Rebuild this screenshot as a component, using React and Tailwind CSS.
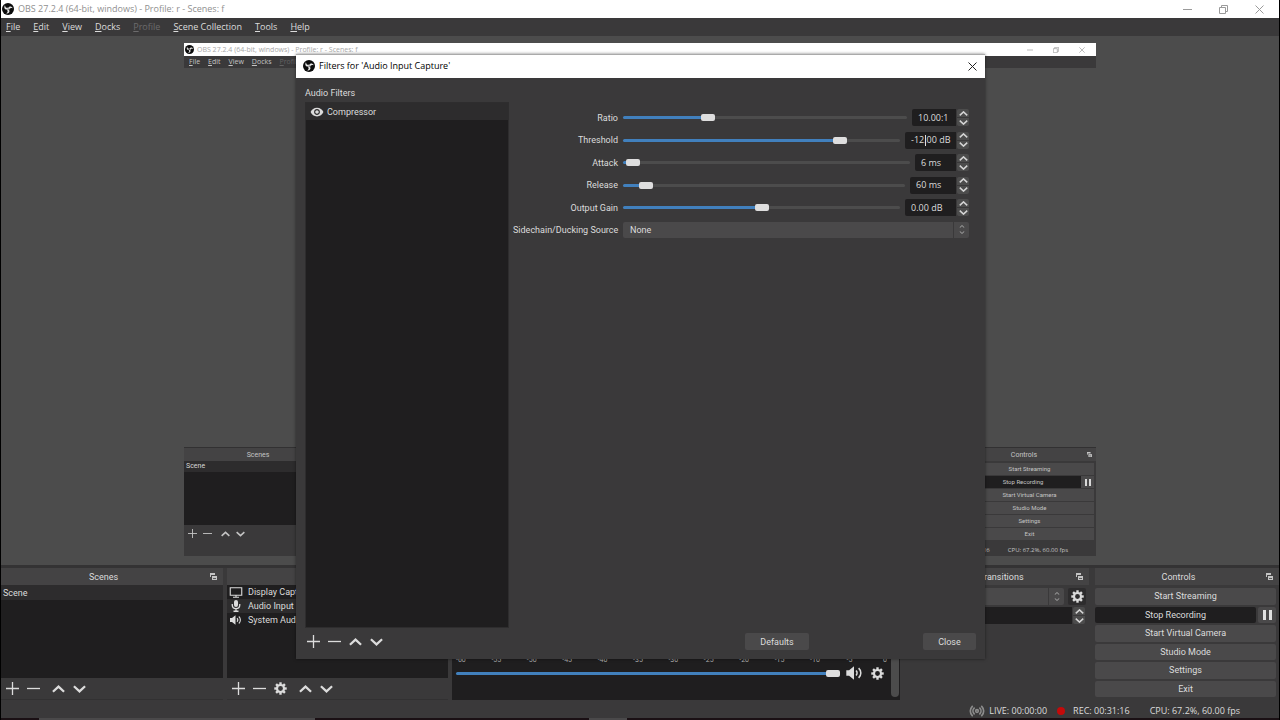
import { useState } from "react";
import clsx from "clsx";
import { MdVisibility } from "react-icons/md";
import { Radio } from "lucide-react";

const menuItems = ["File", "Edit", "View", "Docks", "Profile", "Scene Collection", "Tools", "Help"];

const controlLabels = [
  "Start Streaming",
  "Stop Recording",
  "Start Virtual Camera",
  "Studio Mode",
  "Settings",
  "Exit",
];

const meterTicks = [-60, -55, -50, -45, -40, -35, -30, -25, -20, -15, -10, -5, 0];

const compressorSettings = [
  { id: "ratio", label: "Ratio", min: 1, max: 32, value: 10, text: "10.00:1", width: "w-[44px]" },
  { id: "threshold", label: "Threshold", min: -60, max: 0, value: -12, text: "-12.00 dB", width: "w-[51px]", caret: true },
  { id: "attack", label: "Attack", min: 1, max: 500, value: 6, text: "6 ms", width: "w-[41px]" },
  { id: "release", label: "Release", min: 1, max: 1000, value: 60, text: "60 ms", width: "w-[46px]" },
  { id: "gain", label: "Output Gain", min: -32, max: 32, value: 0, text: "0.00 dB", width: "w-[51px]" },
];

function ObsLogo({ className }) {
  return (
    <svg viewBox="0 0 24 24" className={className} aria-hidden="true">
      <circle cx="12" cy="12" r="12" fill="#0c0c0c" />
      {[-30, 90, 210].map((angle) => (
        <path
          key={angle}
          transform={`rotate(${angle} 12 12)`}
          d="M10.6 2.4C6.2 4.4 5.6 9.4 8.8 11.2C10.6 12.2 12.8 11.4 13.6 9.4C10.6 9.8 8.6 6.4 10.6 2.4Z"
          fill="#e8e8e8"
        />
      ))}
    </svg>
  );
}

function Gear({ className }) {
  return (
    <svg viewBox="0 0 24 24" className={className} fill="none" stroke="currentColor" aria-hidden="true">
      <circle cx="12" cy="12" r="6.5" strokeWidth="4" />
      {[0, 45, 90, 135, 180, 225, 270, 315].map((angle) => (
        <path key={angle} d="M12 0.5V5" strokeWidth="4.4" transform={`rotate(${angle} 12 12)`} />
      ))}
    </svg>
  );
}

function Speaker({ className }) {
  return (
    <svg viewBox="0 0 24 20" className={className} fill="none" stroke="currentColor" aria-hidden="true">
      <path d="M1 6H5L12 0.5V19.5L5 14H1Z" fill="currentColor" stroke="none" />
      <path d="M15 6.5C16.8 8.4 16.8 11.6 15 13.5M18.6 3C22.8 6.6 22.8 13.4 18.6 17" strokeWidth="2.2" />
    </svg>
  );
}

function Microphone({ className }) {
  return (
    <svg viewBox="0 0 20 24" className={className} fill="none" stroke="currentColor" aria-hidden="true">
      <rect x="6" y="0" width="8" height="14" rx="4" fill="currentColor" stroke="none" />
      <path d="M2.5 8V10C2.5 19.6 17.5 19.6 17.5 10V8M10 17V22.5M5 22.5H15" strokeWidth="2.6" />
    </svg>
  );
}

function Monitor({ className }) {
  return (
    <svg viewBox="0 0 26 22" className={className} fill="none" stroke="currentColor" aria-hidden="true">
      <path d="M1.5 1.5H24.5V16.5H1.5ZM13 16.5V20M7 20.5H19" strokeWidth="2.2" />
    </svg>
  );
}

function Chevron({ up, className }) {
  return (
    <svg viewBox="0 0 14 8" className={className} fill="none" stroke="currentColor" strokeWidth="2.4" aria-hidden="true">
      <path d={up ? "M1 7L7 1.4L13 7" : "M1 1L7 6.6L13 1"} />
    </svg>
  );
}

function Plus({ className }) {
  return (
    <svg viewBox="0 0 13 13" className={className} stroke="currentColor" strokeWidth="1.3" aria-hidden="true">
      <path d="M6.5 0V13M0 6.5H13" />
    </svg>
  );
}

function Minus({ className }) {
  return (
    <svg viewBox="0 0 13 13" className={className} stroke="currentColor" strokeWidth="1.3" aria-hidden="true">
      <path d="M0 6.5H13" />
    </svg>
  );
}

function FloatIcon({ className }) {
  return (
    <svg viewBox="0 0 7 7" className={className} aria-hidden="true">
      <path d="M0 0H5V2H1V4H0Z" fill="#c4c4c4" />
      <path d="M2 3H7V7H2Z" fill="#c4c4c4" />
      <path d="M3 5H6V6H3Z" fill="#5a5a5a" />
    </svg>
  );
}

function WindowButtons({ small }) {
  const size = small ? "size-[6px]" : "size-[9px]";
  return (
    <div className={clsx("ml-auto flex items-center text-[#9a9a9a]", small ? "gap-5 pr-[11px]" : "gap-[27px] pr-[15px]")}>
      <button aria-label="Minimize">
        <svg viewBox="0 0 9 9" className={size} stroke="currentColor" fill="none">
          <path d="M0 4.5H9" />
        </svg>
      </button>
      <button aria-label="Restore">
        <svg viewBox="0 0 9 9" className={size} stroke="currentColor" fill="none">
          <path d="M0.5 2.5H6.5V8.5H0.5ZM2.5 2.5V0.5H8.5V6.5H6.5" />
        </svg>
      </button>
      <button aria-label="Close window">
        <svg viewBox="0 0 9 9" className={size} stroke="currentColor" fill="none">
          <path d="M0.5 0.5L8.5 8.5M8.5 0.5L0.5 8.5" />
        </svg>
      </button>
    </div>
  );
}

function DockTitle({ children }) {
  return (
    <div className="flex h-[17px] shrink-0 items-center bg-[#444344] pr-[6px]">
      <h2 className="flex-1 pr-1 text-center">{children}</h2>
      <button aria-label={`Float ${children}`}>
        <FloatIcon className="size-[7px]" />
      </button>
    </div>
  );
}

function ListToolbar({ withGear, spaced, className }) {
  return (
    <div className={clsx("flex shrink-0 items-center gap-2", className)}>
      <button aria-label="Add">
        <Plus className="size-[13px]" />
      </button>
      <button aria-label="Remove">
        <Minus className="size-[13px]" />
      </button>
      {withGear && (
        <button aria-label="Properties">
          <Gear className="size-[13px]" />
        </button>
      )}
      <button aria-label="Move up" className={clsx(spaced && "ml-1")}>
        <Chevron up className="h-2 w-[13px]" />
      </button>
      <button aria-label="Move down">
        <Chevron className="h-2 w-[13px]" />
      </button>
    </div>
  );
}

function SpinButtons() {
  return (
    <div className="ml-px flex w-3 flex-col gap-px self-stretch text-[#d4d4d4]">
      <button aria-label="Increase" className="flex flex-1 items-center justify-center rounded-t-xs bg-[#4c4c4c]">
        <Chevron up className="h-[5px] w-[9px]" />
      </button>
      <button aria-label="Decrease" className="flex flex-1 items-center justify-center rounded-b-xs bg-[#4c4c4c]">
        <Chevron className="h-[5px] w-[9px]" />
      </button>
    </div>
  );
}

function Slider({ id, label, min, max, value, onChange }) {
  const ratio = (value - min) / (max - min);
  const stop = `calc(7px + (100% - 14px) * ${ratio})`;
  return (
    <input
      id={id}
      type="range"
      aria-label={label}
      min={min}
      max={max}
      value={value}
      onChange={(e) => onChange(Number(e.target.value))}
      className="h-[3px] min-w-0 flex-1 appearance-none rounded-full outline-none [&::-webkit-slider-runnable-track]:h-[3px] [&::-webkit-slider-thumb]:-mt-[2px] [&::-webkit-slider-thumb]:h-[7px] [&::-webkit-slider-thumb]:w-[14px] [&::-webkit-slider-thumb]:appearance-none [&::-webkit-slider-thumb]:rounded-[2px] [&::-webkit-slider-thumb]:bg-[#dedede]"
      style={{ backgroundImage: `linear-gradient(to right, #4180bd ${stop}, #4c4c4c ${stop})` }}
    />
  );
}

function SelectArrows() {
  return (
    <span className="pointer-events-none absolute inset-y-0 right-0 flex w-4 flex-col items-center justify-center gap-[3px] border-l border-[#3a393a] text-[#b4b4b4]">
      <Chevron up className="h-[3px] w-[6px]" />
      <Chevron className="h-[3px] w-[6px]" />
    </span>
  );
}

function FilterRow({ setting }) {
  const [value, setValue] = useState(setting.value);
  return (
    <div className="flex h-[17px] items-center">
      <label htmlFor={setting.id} className="mr-[5px] w-[105px] text-right whitespace-nowrap">
        {setting.label}
      </label>
      <Slider {...setting} value={value} onChange={setValue} />
      <div className="relative ml-[5px] flex h-full">
        <input
          type="text"
          aria-label={`${setting.label} value`}
          defaultValue={setting.text}
          className={clsx("rounded-l-xs bg-[#1f1e1f] pl-[6px] font-['Open_Sans',sans-serif] outline-none", setting.width)}
        />
        {setting.caret && <span className="absolute top-[3px] left-[20px] h-[11px] w-px bg-[#e0e0e0]" />}
      </div>
      <SpinButtons />
    </div>
  );
}

function FiltersDialog() {
  return (
    <div
      role="dialog"
      aria-label="Filters for 'Audio Input Capture'"
      className="absolute top-[54px] left-[295px] flex h-[605px] w-[689px] flex-col bg-[#3a393a] shadow-[0_0_3px_rgba(0,0,0,0.5)]"
    >
      <div className="flex h-6 shrink-0 items-center border-t border-[#aaaaaa] bg-white pr-2 pb-px pl-[7px] font-['Open_Sans',sans-serif] text-black">
        <ObsLogo className="size-3" />
        <h1 className="ml-1">Filters for &apos;Audio Input Capture&apos;</h1>
        <button aria-label="Close dialog" className="ml-auto">
          <svg viewBox="0 0 9 9" className="size-[9px]" stroke="#222222" fill="none">
            <path d="M0.5 0.5L8.5 8.5M8.5 0.5L0.5 8.5" />
          </svg>
        </button>
      </div>

      <div className="flex min-h-0 flex-1 pr-4 pl-[9px]">
        <div className="flex w-[204px] flex-col pt-[7px]">
          <h2 className="leading-[17px]">Audio Filters</h2>
          <ul className="flex-1 border border-[#2e2d2e] bg-[#1f1e1f]">
            <li className="flex h-[17px] items-center bg-[#2d2c2d] pl-1">
              <MdVisibility className="size-[14px]" />
              <span className="ml-[3px]">Compressor</span>
            </li>
          </ul>
        </div>
        <div className="flex h-[160px] flex-1 flex-col justify-between pt-[31px] pl-1">
          {compressorSettings.map((setting) => (
            <FilterRow key={setting.id} setting={setting} />
          ))}
          <div className="flex h-4 items-center">
            <label htmlFor="sidechain" className="mr-[5px] w-[105px] text-right whitespace-nowrap">
              Sidechain/Ducking Source
            </label>
            <div className="relative flex flex-1 self-stretch">
              <select id="sidechain" className="flex-1 appearance-none rounded-xs bg-[#4a494a] pl-[7px]">
                <option>None</option>
              </select>
              <SelectArrows />
            </div>
          </div>
        </div>
      </div>

      <div className="flex h-[31px] shrink-0 items-center pr-[9px] pb-1 pl-[11px]">
        <ListToolbar />
        <button className="ml-auto h-[17px] w-16 rounded-xs bg-[#4a494a]">Defaults</button>
        <button className="ml-[114px] h-[17px] w-[53px] rounded-xs bg-[#4a494a]">Close</button>
      </div>
    </div>
  );
}

function PreviewWindow() {
  return (
    <div className="flex aspect-video h-full flex-col bg-[#4c4c4c] text-[6px] leading-[10px] text-[#c4c4c4]">
      <div className="flex h-[13px] shrink-0 items-center bg-white pl-px font-['Open_Sans',sans-serif] text-[7px] text-[#a8a8a8]">
        <ObsLogo className="size-[9px]" />
        <span className="ml-[3px]">OBS 27.2.4 (64-bit, windows) - Profile: r - Scenes: f</span>
        <WindowButtons small />
      </div>
      <div className="flex h-3 shrink-0 items-center gap-2 bg-[#3a393a] pl-[5px] font-['Open_Sans',sans-serif] text-[7px]">
        {menuItems.slice(0, 5).map((item) => (
          <span key={item} className={item === "Profile" ? "text-[#636263]" : ""}>
            <u>{item[0]}</u>
            {item.slice(1)}
          </span>
        ))}
      </div>
      <div className="flex-1" />
      <div className="flex h-[95px] shrink-0 justify-between border-t border-[#323132] bg-[#3a393a]">
        <div className="flex w-[158px] flex-col">
          <div className="h-[13px] bg-[#444344] pr-[10px] text-center text-[7px] leading-[14px]">Scenes</div>
          <div className="flex-1 bg-[#1f1e1f]">
            <div className="h-[11px] bg-[#2d2c2d] pl-0.5 text-[7px] leading-[11px] text-[#d8d8d8]">Scene</div>
          </div>
          <div className="flex h-[17px] items-center gap-[6px] pl-1">
            <Plus className="size-[9px]" />
            <Minus className="size-[9px]" />
            <Chevron up className="ml-[3px] h-[6px] w-[9px]" />
            <Chevron className="h-[6px] w-[9px]" />
          </div>
        </div>
        <div className="flex w-[131px] flex-col">
          <div className="flex h-[13px] items-center bg-[#444344] pr-1 text-[7px]">
            <span className="flex-1 pr-1 text-center">Controls</span>
            <FloatIcon className="size-[5px]" />
          </div>
          <div className="grid flex-1 auto-rows-fr gap-px pt-0.5 pr-0.5 pb-0.5 text-center">
            {controlLabels.map((label) =>
              label === "Stop Recording" ? (
                <div key={label} className="flex">
                  <span className="flex flex-1 items-center justify-center bg-[#1f1e1f]">{label}</span>
                  <span className="flex w-[13px] items-center justify-center gap-0.5 bg-[#4a494a]">
                    <i className="h-[7px] w-0.5 bg-[#d8d8d8]" />
                    <i className="h-[7px] w-0.5 bg-[#d8d8d8]" />
                  </span>
                </div>
              ) : (
                <span key={label} className="flex items-center justify-center bg-[#4a494a]">
                  {label}
                </span>
              )
            )}
          </div>
        </div>
      </div>
      <div className="flex h-[14px] shrink-0 items-center justify-end gap-[18px] bg-[#3a393a] pt-0.5 pr-7 font-['Open_Sans',sans-serif]">
        <span>REC: 00:31:16</span>
        <span>CPU: 67.2%, 60.00 fps</span>
      </div>
    </div>
  );
}

function ScenesDock() {
  return (
    <section className="flex min-h-0 flex-col">
      <DockTitle>Scenes</DockTitle>
      <ul className="flex-1 bg-[#1f1e1f]">
        <li className="h-[15px] bg-[#2d2c2d] pl-0.5 leading-4">Scene</li>
      </ul>
      <ListToolbar spaced className="h-[22px] border-b border-[#323132] pl-[5px]" />
    </section>
  );
}

function SourcesDock() {
  return (
    <section className="flex min-h-0 flex-col">
      <DockTitle>Sources</DockTitle>
      <ul className="flex-1 bg-[#1f1e1f]">
        <li className="flex h-[14px] items-center">
          <Monitor className="ml-0.5 h-[11px] w-[14px]" />
          <span className="ml-[5px]">Display Capture</span>
        </li>
        <li className="flex h-[14px] items-center bg-[#2d2c2d]">
          <Microphone className="ml-1 h-3 w-[10px]" />
          <span className="ml-[7px]">Audio Input Capture</span>
        </li>
        <li className="flex h-[14px] items-center">
          <Speaker className="ml-0.5 h-[10px] w-[13px]" />
          <span className="ml-[6px]">System Audio</span>
        </li>
      </ul>
      <ListToolbar withGear spaced className="h-[22px] border-b border-[#323132] pl-[5px]" />
    </section>
  );
}

function MixerDock() {
  const [volume, setVolume] = useState(100);
  return (
    <section className="flex min-h-0 flex-col">
      <DockTitle>Audio Mixer</DockTitle>
      <div className="flex flex-1 items-end bg-[#1f1e1f] pl-1">
        <div className="flex-1 pb-5">
          <div className="-mr-1 flex justify-between text-[7px] leading-[8px] text-[#b0b0b0]">
            {meterTicks.map((tick) => (
              <span key={tick} className="w-2 text-center">
                {tick}
              </span>
            ))}
          </div>
          <div className="mt-0.5 flex h-[14px] items-center">
            <Slider id="volume" label="Volume" min={0} max={100} value={volume} onChange={setVolume} />
            <button aria-label="Mute" className="ml-[5px]">
              <Speaker className="h-[14px] w-[18px]" />
            </button>
            <button aria-label="Mixer settings" className="mr-px ml-2">
              <Gear className="size-[13px]" />
            </button>
          </div>
        </div>
        <div className="mr-px mb-[3px] ml-[6px] w-2 self-stretch rounded-full bg-[#4c4c4c]" />
      </div>
    </section>
  );
}

function TransitionsDock() {
  return (
    <section className="flex min-h-0 flex-col pr-0.5">
      <DockTitle>Scene Transitions</DockTitle>
      <div className="mt-[3px] flex h-[17px] items-center">
        <div className="relative flex flex-1 self-stretch">
          <select aria-label="Transition" className="min-w-0 flex-1 appearance-none rounded-xs bg-[#4a494a] pl-2">
            <option>Fade</option>
          </select>
          <SelectArrows />
        </div>
        <button
          aria-label="Transition properties"
          className="mr-[3px] ml-1 flex w-[18px] items-center justify-center self-stretch rounded-xs bg-[#2d2c2d]"
        >
          <Gear className="size-[13px]" />
        </button>
      </div>
      <div className="mt-0.5 mr-1 flex h-[17px] items-center">
        <input
          type="text"
          aria-label="Duration"
          defaultValue="300 ms"
          className="h-full min-w-0 flex-1 bg-[#1f1e1f] pl-2"
        />
        <SpinButtons />
      </div>
    </section>
  );
}

function ControlsDock() {
  return (
    <section className="flex min-h-0 flex-col">
      <DockTitle>Controls</DockTitle>
      <div className="grid flex-1 auto-rows-fr gap-[2px] pt-[3px] pr-[3px] pb-[3px]">
        {controlLabels.map((label) =>
          label === "Stop Recording" ? (
            <div key={label} className="flex gap-[2px]">
              <button className="flex-1 rounded-xs bg-[#1f1e1f]">{label}</button>
              <button aria-label="Pause recording" className="flex w-[18px] items-center justify-center gap-[3px] rounded-xs bg-[#4a494a]">
                <i className="h-[10px] w-[3px] bg-[#e0e0e0]" />
                <i className="h-[10px] w-[3px] bg-[#e0e0e0]" />
              </button>
            </div>
          ) : (
            <button key={label} className="rounded-xs bg-[#4a494a]">
              {label}
            </button>
          )
        )}
      </div>
    </section>
  );
}

export default function App() {
  return (
    <div className="relative flex h-screen flex-col overflow-hidden border-x border-black bg-[#3a393a] font-[Roboto,sans-serif] text-[9px] leading-[14px] text-[#dcdcdc]">
      <header className="flex h-[18px] shrink-0 items-center bg-white pl-px font-['Open_Sans',sans-serif] text-[#8f8f8f]">
        <ObsLogo className="size-3" />
        <span className="ml-1">OBS 27.2.4 (64-bit, windows) - Profile: r - Scenes: f</span>
        <WindowButtons />
      </header>

      <nav className="flex h-[18px] shrink-0 items-center gap-[13px] pl-[5px] font-['Open_Sans',sans-serif]">
        {menuItems.map((item) => (
          <button key={item} disabled={item === "Profile"} className="disabled:text-[#6c6b6c]">
            <u>{item[0]}</u>
            {item.slice(1)}
          </button>
        ))}
      </nav>

      <main className="flex min-h-0 flex-1 justify-center bg-[#4c4c4c] pt-[7px] pb-[9px]">
        <PreviewWindow />
      </main>

      <div className="grid h-[135px] shrink-0 grid-cols-[222fr_221fr_448fr_187fr_184fr] gap-1 border-t-[3px] border-[#343334]">
        <ScenesDock />
        <SourcesDock />
        <MixerDock />
        <TransitionsDock />
        <ControlsDock />
      </div>

      <footer className="flex h-[18px] shrink-0 items-center justify-end pt-1 pr-[39px] font-['Open_Sans',sans-serif]">
        <Radio className="size-4 text-[#8c8c8c]" strokeWidth={2.5} />
        <span className="ml-1">LIVE: 00:00:00</span>
        <span className="mr-2 ml-[10px] size-2 rounded-full bg-[#c40a0a]" />
        <span>REC: 00:31:16</span>
        <span className="ml-5">CPU: 67.2%, 60.00 fps</span>
      </footer>
      <div className="flex h-0.5 shrink-0 bg-[#1a1014]">
        <span className="ml-[3%] w-[21.6%] bg-[#4a494a]" />
        <span className="ml-[21.4%] w-[3%] bg-[#4a494a]" />
      </div>

      <FiltersDialog />
    </div>
  );
}
